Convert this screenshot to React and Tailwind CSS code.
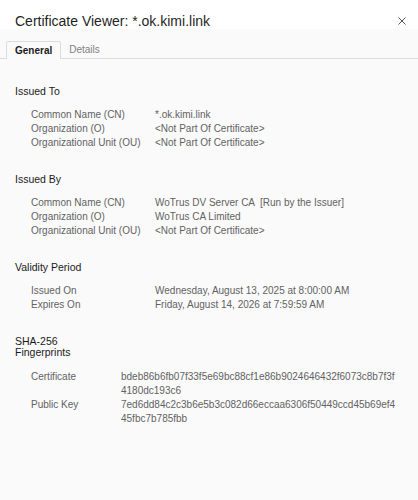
import React from "react";

const sections = [
  {
    title: "Issued To",
    rows: [
      ["Common Name (CN)", "*.ok.kimi.link"],
      ["Organization (O)", "<Not Part Of Certificate>"],
      ["Organizational Unit (OU)", "<Not Part Of Certificate>"],
    ],
  },
  {
    title: "Issued By",
    rows: [
      ["Common Name (CN)", "WoTrus DV Server CA  [Run by the Issuer]"],
      ["Organization (O)", "WoTrus CA Limited"],
      ["Organizational Unit (OU)", "<Not Part Of Certificate>"],
    ],
  },
  {
    title: "Validity Period",
    rows: [
      ["Issued On", "Wednesday, August 13, 2025 at 8:00:00 AM"],
      ["Expires On", "Friday, August 14, 2026 at 7:59:59 AM"],
    ],
  },
];

const fingerprints = [
  ["Certificate", ["bdeb86b6fb07f33f5e69bc88cf1e86b9024646432f6073c8b7f3f", "4180dc193c6"]],
  ["Public Key", ["7ed6dd84c2c3b6e5b3c082d66eccaa6306f50449ccd45b69ef4", "45fbc7b785fbb"]],
];

const App = () => {
  return (
    <div
      className="w-[418px] h-[500px] bg-[#fafafa] flex flex-col overflow-hidden"
      style={{ fontFamily: '"Liberation Sans", Arial, sans-serif' }}
    >
      {/* header */}
      <div className="bg-white h-[29px] flex items-start justify-between pl-[15px] pr-[12px] pt-[13px]">
        <h1 className="text-[14px] leading-[16px] text-[#1f1f1f]">
          Certificate Viewer: *.ok.kimi.link
        </h1>
        <svg width="8" height="8" viewBox="0 0 8 8" className="mt-[4px]">
          <path d="M0.5 0.5 L7.5 7.5 M7.5 0.5 L0.5 7.5" stroke="#444" strokeWidth="0.9" />
        </svg>
      </div>

      {/* tabs */}
      <div className="mt-[12px] flex items-end border-b border-[#dcdcdc] pl-[6px] h-[18px]">
        <div className="h-[18px] -mb-px px-[8px] flex items-center border border-b-0 border-[#dcdcdc] bg-[#fafafa] rounded-t-[2px]">
          <span className="text-[10px] font-bold text-[#1a1a1a]">General</span>
        </div>
        <div className="h-[18px] px-[8px] flex items-center">
          <span className="text-[10px] text-[#808080]">Details</span>
        </div>
      </div>

      {/* content */}
      <div className="pl-[15px] pr-[8px] pt-[25px]">
        {sections.map((s) => (
          <div key={s.title} className="mb-[22px]">
            <h2 className="text-[10.5px] leading-[14px] font-medium text-[#1a1a1a]">{s.title}</h2>
            <div className="mt-[10px] pl-[16px]">
              {s.rows.map(([label, value]) => (
                <div key={label} className="flex text-[10px] leading-[14px] text-[#626262]">
                  <span className="w-[124px] shrink-0">{label}</span>
                  <span className="whitespace-pre">{value}</span>
                </div>
              ))}
            </div>
          </div>
        ))}

        <div>
          <h2 className="text-[10.5px] leading-[11px] font-medium text-[#1a1a1a] pt-[2px]">
            <span className="block">SHA-256</span>
            <span className="block">Fingerprints</span>
          </h2>
          <div className="mt-[12px] pl-[16px]">
            {fingerprints.map(([label, lines]) => (
              <div key={label} className="flex text-[10px] leading-[14px] text-[#626262]">
                <span className="w-[90px] shrink-0">{label}</span>
                <span>
                  {lines.map((l) => (
                    <span key={l} className="block">{l}</span>
                  ))}
                </span>
              </div>
            ))}
          </div>
        </div>
      </div>
    </div>
  );
};

export default App;
